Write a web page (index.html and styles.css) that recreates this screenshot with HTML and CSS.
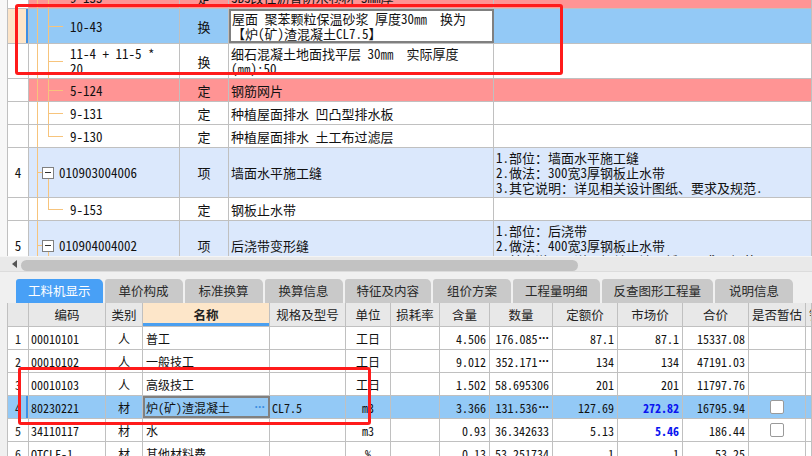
FILE: index.html
```html
<!DOCTYPE html>
<html lang="zh-CN">
<head>
<meta charset="utf-8">
<title>预算</title>
<link rel="stylesheet" href="styles.css">
</head>
<body>
<div class="app">
  <div class="top">
    <div class="tgrid">
      <div class="trow h23 pink">
        <div class="c0"></div>
        <div class="ccode tc"><span class="ctext">9-133</span></div>
        <div class="ctype">定</div>
        <div class="cname">SBS改性沥青防水卷材 3mm厚</div>
        <div class="cdesc"></div>
      </div>
      <div class="trow h35 sel">
        <div class="c0 cur"></div>
        <div class="ccode tc"><span class="ctext">10-43</span></div>
        <div class="ctype">换</div>
        <div class="cname edit">屋面 聚苯颗粒保温砂浆 厚度30㎜&nbsp; 换为<br>【炉(矿)渣混凝土CL7.5】</div>
        <div class="cdesc"></div>
      </div>
      <div class="trow h35">
        <div class="c0"></div>
        <div class="ccode tc"><span class="ctext">11-4 + 11-5 *<br>20</span></div>
        <div class="ctype">换</div>
        <div class="cname">细石混凝土地面找平层 30㎜&nbsp; 实际厚度<br>(㎜):50</div>
        <div class="cdesc"></div>
      </div>
      <div class="trow h23 pink">
        <div class="c0"></div>
        <div class="ccode tc"><span class="ctext">5-124</span></div>
        <div class="ctype">定</div>
        <div class="cname">钢筋网片</div>
        <div class="cdesc"></div>
      </div>
      <div class="trow h23">
        <div class="c0"></div>
        <div class="ccode tc"><span class="ctext">9-131</span></div>
        <div class="ctype">定</div>
        <div class="cname">种植屋面排水 凹凸型排水板</div>
        <div class="cdesc"></div>
      </div>
      <div class="trow h23">
        <div class="c0"></div>
        <div class="ccode tl"><span class="ctext">9-130</span></div>
        <div class="ctype">定</div>
        <div class="cname">种植屋面排水 土工布过滤层</div>
        <div class="cdesc"></div>
      </div>
      <div class="trow h50 bill">
        <div class="c0">4</div>
        <div class="ccode tp"><span class="exp"></span><span class="ptext">010903004006</span></div>
        <div class="ctype">项</div>
        <div class="cname">墙面水平施工缝</div>
        <div class="cdesc">1.部位：墙面水平施工缝<br>2.做法：300宽3厚钢板止水带<br>3.其它说明：详见相关设计图纸、要求及规范.</div>
      </div>
      <div class="trow h23">
        <div class="c0"></div>
        <div class="ccode tl"><span class="ctext">9-153</span></div>
        <div class="ctype">定</div>
        <div class="cname">钢板止水带</div>
        <div class="cdesc"></div>
      </div>
      <div class="trow h50 bill">
        <div class="c0">5</div>
        <div class="ccode tp"><span class="exp"></span><span class="ptext">010904004002</span></div>
        <div class="ctype">项</div>
        <div class="cname">后浇带变形缝</div>
        <div class="cdesc">1.部位：后浇带<br>2.做法：400宽3厚钢板止水带<br>3.其它说明：详见相关设计图纸、要求及规范.</div>
      </div>
    </div>
  </div>

  <div class="hscroll">
    <span class="arrow"></span>
    <span class="thumb"></span>
  </div>
  <div class="split"></div>

  <div class="tabs">
    <div class="tab active">工料机显示</div>
    <div class="tab">单价构成</div>
    <div class="tab">标准换算</div>
    <div class="tab">换算信息</div>
    <div class="tab">特征及内容</div>
    <div class="tab">组价方案</div>
    <div class="tab">工程量明细</div>
    <div class="tab">反查图形工程量</div>
    <div class="tab">说明信息</div>
  </div>

  <div class="bgrid">
    <div class="brow head">
      <div class="b0"></div>
      <div class="bc">编码</div>
      <div class="bc">类别</div>
      <div class="bc hsel">名称</div>
      <div class="bc">规格及型号</div>
      <div class="bc">单位</div>
      <div class="bc">损耗率</div>
      <div class="bc">含量</div>
      <div class="bc">数量</div>
      <div class="bc">定额价</div>
      <div class="bc">市场价</div>
      <div class="bc">合价</div>
      <div class="bc">是否暂估</div>
      <div class="bc left">锁</div>
    </div>
    <div class="brow">
      <div class="b0">1</div>
      <div class="bl">00010101</div>
      <div class="bm">人</div>
      <div class="bl nm">普工</div>
      <div class="bl"></div>
      <div class="bm">工日</div>
      <div class="bl"></div>
      <div class="br">4.506</div>
      <div class="br">176.085<span class="ell">···</span></div>
      <div class="br">87.1</div>
      <div class="br">87.1</div>
      <div class="br">15337.08</div>
      <div class="bm"></div>
      <div class="bl"></div>
    </div>
    <div class="brow">
      <div class="b0">2</div>
      <div class="bl">00010102</div>
      <div class="bm">人</div>
      <div class="bl nm">一般技工</div>
      <div class="bl"></div>
      <div class="bm">工日</div>
      <div class="bl"></div>
      <div class="br">9.012</div>
      <div class="br">352.171<span class="ell">···</span></div>
      <div class="br">134</div>
      <div class="br">134</div>
      <div class="br">47191.03</div>
      <div class="bm"></div>
      <div class="bl"></div>
    </div>
    <div class="brow">
      <div class="b0">3</div>
      <div class="bl">00010103</div>
      <div class="bm">人</div>
      <div class="bl nm">高级技工</div>
      <div class="bl"></div>
      <div class="bm">工日</div>
      <div class="bl"></div>
      <div class="br">1.502</div>
      <div class="br">58.695306</div>
      <div class="br">201</div>
      <div class="br">201</div>
      <div class="br">11797.76</div>
      <div class="bm"></div>
      <div class="bl"></div>
    </div>
    <div class="brow sel">
      <div class="b0 cur">4</div>
      <div class="bl">80230221</div>
      <div class="bm">材</div>
      <div class="bl nm edit"><span>炉(矿)渣混凝土</span><span class="ell dots">···</span></div>
      <div class="bl">CL7.5</div>
      <div class="bm">m3</div>
      <div class="bl"></div>
      <div class="br">3.366</div>
      <div class="br">131.536<span class="ell">···</span></div>
      <div class="br">127.69</div>
      <div class="br price">272.82</div>
      <div class="br">16795.94</div>
      <div class="bm"><span class="chk"></span></div>
      <div class="bl"></div>
    </div>
    <div class="brow">
      <div class="b0">5</div>
      <div class="bl">34110117</div>
      <div class="bm">材</div>
      <div class="bl nm">水</div>
      <div class="bl"></div>
      <div class="bm">m3</div>
      <div class="bl"></div>
      <div class="br">0.93</div>
      <div class="br">36.342633</div>
      <div class="br">5.13</div>
      <div class="br price">5.46</div>
      <div class="br">186.44</div>
      <div class="bm"><span class="chk"></span></div>
      <div class="bl"></div>
    </div>
    <div class="brow">
      <div class="b0">6</div>
      <div class="bl">QTCLF-1</div>
      <div class="bm">材</div>
      <div class="bl nm">其他材料费</div>
      <div class="bl"></div>
      <div class="bm">%</div>
      <div class="bl"></div>
      <div class="br">0.13</div>
      <div class="br">53.251734</div>
      <div class="br">1</div>
      <div class="br">1</div>
      <div class="br">53.25</div>
      <div class="bm"></div>
      <div class="bl"></div>
    </div>
  </div>

  <div class="mark mark-top"></div>
  <div class="mark mark-bottom"></div>
</div>
</body>
</html>
```

FILE: styles.css
```css
* {
  box-sizing: border-box;
  margin: 0;
  padding: 0;
}

html, body {
  width: 812px;
  height: 456px;
  overflow: hidden;
}

body {
  background: #f0f0f0;
  font-family: "Noto Sans Mono CJK SC", "Noto Sans CJK SC", "Liberation Sans", sans-serif;
  color: #111;
}

.app {
  position: relative;
  width: 812px;
  height: 456px;
  overflow: hidden;
}

/* ---------- top grid ---------- */
.top {
  height: 256px;
  overflow: hidden;
  background: #f7f7f7;
  padding-left: 7px;
}

.tgrid {
  margin-top: -14px;
  border-left: 1px solid #c0c0c0;
  background: #fff;
  font-size: 13px;
  line-height: 15px;
  --t: #f7c47c;
}

.trow {
  display: grid;
  grid-template-columns: 21px 151px 49px 265px 1fr;
  border-bottom: 1px solid #c0c0c0;
}

.h23 { height: 23px; }
.h35 { height: 35px; }
.h50 { height: 50px; }

.trow > div {
  display: flex;
  align-items: center;
  border-right: 1px solid #c0c0c0;
  overflow: hidden;
  white-space: nowrap;
}

.trow .c0 {
  justify-content: center;
  background: #fff;
}

.trow .c0.cur {
  background: #fde5c9;
  box-shadow: inset -2px 0 0 #3c8fe6;
}

.pink > div:not(.c0) { background-color: #ff9494; }
.sel > div:not(.c0) { background-color: #93c9f6; }
.bill > div:not(.c0) { background-color: #dbe8fc; }

.ctype {
  justify-content: center;
}

.cname {
  padding-left: 2px;
}

.cname.edit {
  background-color: #fff !important;
  border: 2px solid #808080;
  padding-left: 1px;
}

.cdesc {
  padding-left: 2px;
}

.ccode {
  background-repeat: no-repeat;
}

.ctext {
  padding-left: 41px;
}

.ptext {
  padding-left: 5px;
}

/* tree connectors */
.tc {
  background-image:
    linear-gradient(var(--t), var(--t)),
    linear-gradient(var(--t), var(--t)),
    linear-gradient(var(--t), var(--t));
  background-position: 8px 0, 19px 0, 19px 50%;
  background-size: 1px 100%, 1px 100%, 15px 1px;
}

.tl {
  background-image:
    linear-gradient(var(--t), var(--t)),
    linear-gradient(var(--t), var(--t)),
    linear-gradient(var(--t), var(--t));
  background-position: 8px 0, 19px 0, 19px 50%;
  background-size: 1px 100%, 1px 50%, 15px 1px;
}

.tp {
  background-image:
    linear-gradient(var(--t), var(--t)),
    linear-gradient(var(--t), var(--t)),
    linear-gradient(var(--t), var(--t));
  background-position: 8px 0, 8px 50%, 19px 100%;
  background-size: 1px 100%, 5px 1px, 1px calc(50% - 6px);
}

.exp {
  display: inline-block;
  width: 12px;
  height: 12px;
  margin-left: 13px;
  border: 1px solid #808080;
  background: linear-gradient(#333, #333) center / 6px 1px no-repeat, #fff;
  flex: none;
}

/* ---------- scrollbar / splitter ---------- */
.hscroll {
  height: 15px;
  background: #e9e9e9;
  display: flex;
  align-items: center;
  padding-left: 12px;
  border-top: 1px solid #f4f4f4;
}

.arrow {
  width: 0;
  height: 0;
  border-top: 4px solid transparent;
  border-bottom: 4px solid transparent;
  border-right: 5px solid #555;
}

.thumb {
  width: 557px;
  height: 11px;
  margin-left: 4px;
  margin-top: 2px;
  background: #c2c2c2;
  border-radius: 6px;
}

.split {
  height: 8px;
  background: #f0f0f0;
  border-top: 1px solid #dcdcdc;
}

/* ---------- tabs ---------- */
.tabs {
  display: flex;
  gap: 2px;
  padding-left: 16px;
  height: 24px;
}

.tab {
  min-width: 78px;
  padding: 0 12px;
  height: 24px;
  line-height: 24px;
  text-align: center;
  font-family: "Noto Sans CJK SC", sans-serif;
  font-size: 12.5px;
  color: #2a2a2a;
  background: #c9c9c9;
  border-radius: 3px 5px 0 0;
}

.tab.active {
  background: #48a0f6;
  color: #fff;
}

/* ---------- bottom grid ---------- */
.bgrid {
  margin-left: 7px;
  border-left: 1px solid #c0c0c0;
  background: #fff;
  font-size: 12px;
}

.brow {
  display: grid;
  grid-template-columns: 21px 77px 37px 127px 76px 45px 49px 50px 63px 65px 65px 66px 57px 1fr;
  height: 23px;
  border-bottom: 1px solid #c0c0c0;
}

.brow > div {
  display: flex;
  align-items: center;
  border-right: 1px solid #c0c0c0;
  white-space: nowrap;
  overflow: hidden;
}

.brow.head {
  height: 24px;
  background: #e8e8e8;
  font-family: "Noto Sans CJK SC", sans-serif;
  font-size: 12.5px;
  color: #222;
}

.head .bc {
  justify-content: center;
}

.head .bc.left {
  justify-content: flex-start;
  padding-left: 3px;
}

.head .hsel {
  background: #fde6c9;
  font-weight: bold;
  box-shadow: inset 0 -3px 0 #4a9ff0;
}

.b0 {
  justify-content: center;
  color: #222;
}

.b0.cur {
  background: #fde5c9;
  box-shadow: inset -2px 0 0 #3c8fe6;
}

.bl {
  padding-left: 2px;
}

.bl.nm {
  padding-left: 3px;
}

.bm {
  justify-content: center;
}

.br {
  justify-content: flex-end;
  padding-right: 3px;
}

.ell {
  font-family: "Liberation Sans", sans-serif;
  font-weight: bold;
  letter-spacing: -0.5px;
  margin-left: 1px;
}

.brow.sel > div:not(.b0) {
  background: #93c9f6;
}

.brow.sel > .edit {
  background: #fff;
  border: 2px solid #808080;
  padding-left: 1px;
  justify-content: space-between;
}

.dots {
  color: #3d8ee0;
  padding-right: 3px;
}

.price {
  color: #0a14f0;
  font-weight: bold;
}

.chk {
  display: inline-block;
  width: 14px;
  height: 14px;
  background: #fff;
  border: 1px solid #9a9a9a;
  border-radius: 2px;
}

/* ---------- annotation marks ---------- */
.mark {
  position: absolute;
  border: 3px solid #ff1b1b;
  border-radius: 3px;
}

.mark-top {
  left: 15px;
  top: 4px;
  width: 548px;
  height: 71px;
}

.mark-bottom {
  left: 18px;
  top: 367px;
  width: 353px;
  height: 58px;
}
```
